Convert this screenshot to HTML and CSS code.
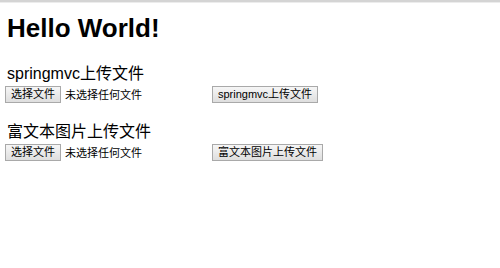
FILE: index.html
```html
<!DOCTYPE html>
<html lang="zh-CN">
<head>
    <meta charset="UTF-8">
    <meta name="viewport" content="width=device-width, initial-scale=1.0">
    <title>Hello World</title>
    <link rel="stylesheet" href="styles.css">
</head>
<body>
    <div class="topbar"></div>
    <div class="page">
        <h2>Hello World!</h2>

        <!-- springmvc upload -->
        <form class="upload-form" action="/upload" method="post" enctype="multipart/form-data">
            <p class="form-title">springmvc上传文件</p>
            <div class="row">
                <span class="file-input">
                    <button type="button" class="btn">选择文件</button>
                    <span class="file-name">未选择任何文件</span>
                </span>
                <button type="submit" class="btn">springmvc上传文件</button>
            </div>
        </form>

        <!-- rich text image upload -->
        <form class="upload-form" action="/richtext_img_upload" method="post" enctype="multipart/form-data">
            <p class="form-title">富文本图片上传文件</p>
            <div class="row">
                <span class="file-input">
                    <button type="button" class="btn">选择文件</button>
                    <span class="file-name">未选择任何文件</span>
                </span>
                <button type="submit" class="btn">富文本图片上传文件</button>
            </div>
        </form>
    </div>
</body>
</html>
```

FILE: styles.css
```css
/* Global Styles */
body {
    margin: 0;
    font-family: "Liberation Sans", "Noto Sans CJK SC", sans-serif;
    color: #000;
    background: #fff;
}

.topbar {
    height: 2px;
    background: #d4d4d4;
    border-bottom: 1px solid #ececec;
}

.page {
    padding: 0 5px;
}

h2 {
    font-size: 26px;
    font-weight: bold;
    margin: 10px 0 0 2px;
    line-height: 30px;
}

/* Upload forms */
.upload-form {
    margin-top: 21px;
}

.upload-form + .upload-form {
    margin-top: 19px;
}

.form-title {
    margin: 0 0 0 2px;
    font-size: 16px;
    line-height: 20px;
}

.row {
    display: flex;
    align-items: center;
    height: 18px;
    margin-top: 1px;
    font-size: 11px;
}

.file-input {
    display: flex;
    align-items: center;
    width: 207px;
}

.file-name {
    margin-left: 4px;
}

.btn {
    font-family: "Liberation Sans", "Noto Sans CJK SC", sans-serif;
    font-size: 11px;
    height: 17px;
    padding: 0 5px;
    line-height: 15px;
    color: #000;
    background: linear-gradient(#f6f6f6, #dedede);
    border: 1px solid #a9a9a9;
    border-radius: 0;
}
```
